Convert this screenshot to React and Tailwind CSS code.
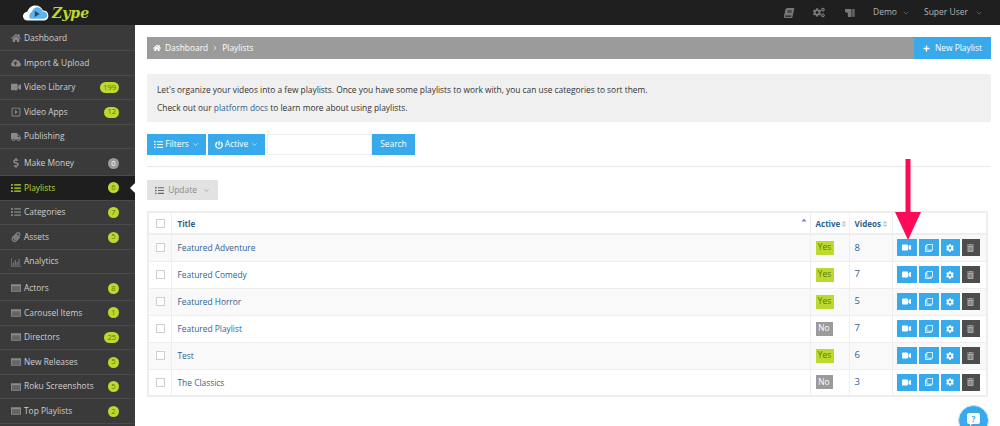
import React from "react";
import {
  FaHome, FaCloudUploadAlt, FaVideo, FaRegCaretSquareRight, FaTruck, FaDollarSign, FaListUl, FaList,
  FaPaperclip, FaBook, FaCogs, FaPlus, FaPowerOff, FaCog, FaTrashAlt, FaRegClone, FaSort, FaCaretUp,
} from "react-icons/fa";
import { ChevronDown, ChevronRight } from "lucide-react";

const Panel = ({ className }) => (
  <svg viewBox="0 0 16 14" className={className} fill="currentColor">
    <path d="M0 1h16v12H0z M1.500 4.500v7h13v-7z" fillRule="evenodd" />
    <path d="M1.500 4.500h13v7h-13z" opacity="0.55" />
  </svg>
);

const Bars = ({ className }) => (
  <svg viewBox="0 0 16 14" className={className} fill="currentColor">
    <path d="M0 1h1v12h15v1H0z" />
    <path d="M3 8h1.500v4H3zM6 4h1.500v8H6zM9 7h1.500v5H9zM12 2h1.500v10H12z" />
  </svg>
);

const Flag = ({ className }) => (
  <svg viewBox="0 0 14 13" className={className} fill="currentColor">
    <path d="M0 1h9v11H4V6.500L0 5z" />
    <path d="M10 1h3.500v11H10z" opacity="0.8" />
  </svg>
);

const menu = [
  { label: "Dashboard", icon: FaHome },
  { label: "Import & Upload", icon: FaCloudUploadAlt },
  { label: "Video Library", icon: FaVideo, badge: "199" },
  { label: "Video Apps", icon: FaRegCaretSquareRight, badge: "12" },
  { label: "Publishing", icon: FaTruck, gap: true },
  { label: "Make Money", icon: FaDollarSign, badge: "0", grey: true },
  { label: "Playlists", icon: FaListUl, badge: "6", active: true },
  { label: "Categories", icon: FaList, badge: "7" },
  { label: "Assets", icon: FaPaperclip, badge: "5" },
  { label: "Analytics", icon: Bars, gap: true },
  { label: "Actors", icon: Panel, badge: "8" },
  { label: "Carousel Items", icon: Panel, badge: "1" },
  { label: "Directors", icon: Panel, badge: "25" },
  { label: "New Releases", icon: Panel, badge: "5" },
  { label: "Roku Screenshots", icon: Panel, badge: "5" },
  { label: "Top Playlists", icon: Panel, badge: "2" },
];

const rows = [
  { title: "Featured Adventure", active: true, videos: 8 },
  { title: "Featured Comedy", active: true, videos: 7 },
  { title: "Featured Horror", active: true, videos: 5 },
  { title: "Featured Playlist", active: false, videos: 7 },
  { title: "Test", active: true, videos: 6 },
  { title: "The Classics", active: false, videos: 3 },
];

const Logo = () => (
  <div className="flex items-center gap-[1px] ml-[22px]">
    <svg viewBox="0 0 32 18" className="w-[29px] h-[16px]">
      <path d="M6 17.500a5 5 0 0 1-.5-10C7.500 2.500 11 .5 15 .5c4 0 7 2.300 8.300 5.600a5.800 5.800 0 0 1 1.700 11.400z" fill="#fff" />
      <path d="M9 15.500c-2-2-1-6 1.500-7.500C12 4 15 2.500 17 2.500c3.500 0 5.500 2.500 6 5 3-.5 5.500 2 5 5-.3 1.800-2 3-4 3z" fill="#5cb5ee" />
      <path d="M14 6.500l5.500 3.500-5.500 3.500z" fill="#2a4a63" />
    </svg>
    <span className="font-['DejaVu_Serif',serif] text-[14px] leading-none font-bold italic text-[#bcd92e]">Zype</span>
  </div>
);

const Checkbox = () => <span className="block w-[9px] h-[9px] bg-white border border-[#cfcfcf]" />;

const ActionButton = ({ className, children }) => (
  <button className={`h-[17px] flex items-center justify-center text-white ${className}`}>{children}</button>
);

const MenuItem = ({ item }) => {
  const Icon = item.icon;
  return (
    <div
      className={`relative h-[24.6px] flex items-center pl-[9px] pr-[16px] text-[8.400px] border-b border-[#4a4a4a] ${
        item.active ? "bg-[#1e1e1e] text-[#bcd92e]" : "text-[#cfcfcf]"
      } ${item.gap ? "mb-[2px]" : ""}`}
    >
      <span className="w-[14px] flex justify-center mr-[1px]">
        <Icon className={`w-[10px] h-[10px] ${item.active ? "text-[#bcd92e]" : "text-[#8a8a8a]"}`} />
      </span>
      <span className="flex-1 whitespace-nowrap">{item.label}</span>
      {item.badge && (
        <span
          className={`h-[11px] min-w-[11px] px-[3px] rounded-full flex items-center justify-center text-[7.500px] ${
            item.grey ? "bg-[#9a9a9a] text-white" : "bg-[#bcd92e] text-[#5f7a08]"
          }`}
        >
          {item.badge}
        </span>
      )}
      {item.active && (
        <span className="absolute right-0 top-[7px] w-0 h-0 border-y-[5px] border-y-transparent border-r-[5px] border-r-white" />
      )}
    </div>
  );
};

const App = () => {
  return (
    <div className="relative w-[1000px] h-[426px] overflow-hidden bg-white font-['Open_Sans',sans-serif]">
      <header className="h-[25px] bg-[#1f1f1f] flex items-center">
        <Logo />
        <div className="ml-auto flex items-center text-[8.500px] text-[#b5b5b5]">
          <FaBook className="w-[10px] h-[10px] text-[#777] mr-[19px] -skew-x-12" />
          <FaCogs className="w-[12px] h-[11px] text-[#777] mr-[20px]" />
          <Flag className="w-[10px] h-[10px] text-[#777] mr-[18px]" />
          <span className="mr-[5px]">Demo</span>
          <ChevronDown className="w-[8px] h-[8px] text-[#777] mr-[14px]" />
          <span className="mr-[7px]">Super User</span>
          <ChevronDown className="w-[8px] h-[8px] text-[#777] mr-[17px]" />
        </div>
      </header>

      <div className="flex h-[401px]">
        <aside className="w-[135px] shrink-0 bg-[#3a3a3a] pt-[1.500px]">
          {menu.map((item) => (
            <MenuItem key={item.label} item={item} />
          ))}
        </aside>

        <main className="flex-1 pl-[12px] pr-[9px] pt-[12px] text-[#333]">
          <div className="h-[22px] flex bg-[#9b9b9b] text-white text-[8.400px]">
            <div className="flex-1 flex items-center pl-[6px]">
              <FaHome className="w-[8px] h-[8px] mr-[4px]" />
              <span>Dashboard</span>
              <ChevronRight className="w-[8px] h-[8px] mx-[3px]" />
              <span>Playlists</span>
            </div>
            <button className="w-[77px] bg-[#38aaeb] flex items-center justify-center font-medium">
              <FaPlus className="w-[7px] h-[7px] mr-[5px]" />
              New Playlist
            </button>
          </div>

          <div className="mt-[15px] h-[48px] bg-[#f0f0f0] px-[10px] pt-[7px] text-[8.400px] leading-[18px] text-[#333]">
            <p>Let's organize your videos into a few playlists. Once you have some playlists to work with, you can use categories to sort them.</p>
            <p>
              Check out our <span className="text-[#2f5f8f]">platform docs</span> to learn more about using playlists.
            </p>
          </div>

          <div className="mt-[12px] flex h-[21px] text-white text-[8.400px] font-medium">
            <button className="w-[59px] bg-[#38aaeb] flex items-center justify-center">
              <FaListUl className="w-[9px] h-[9px] mr-[2px]" />
              Filters
              <ChevronDown className="w-[7px] h-[7px] ml-[3px]" />
            </button>
            <button className="ml-[2px] w-[57px] bg-[#38aaeb] flex items-center justify-center">
              <FaPowerOff className="w-[8px] h-[8px] mr-[2px]" />
              Active
              <ChevronDown className="w-[7px] h-[7px] ml-[3px]" />
            </button>
            <div className="ml-[2px] w-[105px] bg-white border border-[#eeeeee]" />
            <button className="w-[43px] bg-[#38aaeb]">Search</button>
          </div>

          <div className="mt-[11px] border-t border-[#e8e8e8]" />

          <button className="mt-[13px] w-[71px] h-[20px] bg-[#e2e2e2] text-[#8a8a8a] text-[8.400px] flex items-center justify-center">
            <FaListUl className="w-[9px] h-[9px] mr-[4px] text-[#666]" />
            Update
            <ChevronDown className="w-[7px] h-[7px] ml-[6px]" />
          </button>

          <table className="mt-[11px] w-[841px] table-fixed border-collapse border-2 border-[#eeeeee] text-[8.400px]">
            <colgroup>
              <col className="w-[23px]" />
              <col />
              <col className="w-[39px]" />
              <col className="w-[43px]" />
              <col className="w-[95px]" />
            </colgroup>
            <thead>
              <tr className="h-[22px] text-[#2f5f8f] text-[8px] font-bold">
                <th className="border border-[#eeeeee] border-b-2 pl-[7px]"><Checkbox /></th>
                <th className="relative border border-[#eeeeee] border-b-2 text-left pl-[6px] pt-[2px]">
                  Title
                  <FaCaretUp className="absolute right-[2px] top-[3px] w-[8px] h-[8px] text-[#7b7fd6]" />
                </th>
                <th className="border border-[#eeeeee] border-b-2 text-left pl-[5px] pt-[2px]">
                  <span className="flex items-center">Active<FaSort className="w-[6px] h-[8px] ml-[1px] text-[#ccc]" /></span>
                </th>
                <th className="border border-[#eeeeee] border-b-2 text-left pl-[5px] pt-[2px]">
                  <span className="flex items-center">Videos<FaSort className="w-[6px] h-[8px] ml-[1px] text-[#ccc]" /></span>
                </th>
                <th className="border border-[#eeeeee] border-b-2" />
              </tr>
            </thead>
            <tbody>
              {rows.map((row, i) => (
                <tr key={row.title} className={`h-[27px] ${i % 2 === 0 ? "bg-[#f9f9f9]" : "bg-white"}`}>
                  <td className="border border-[#eeeeee] pl-[7px]"><Checkbox /></td>
                  <td className="border border-[#eeeeee] pl-[6px] pt-[2px] text-[#2f5f8f]">{row.title}</td>
                  <td className="border border-[#eeeeee] pl-[5px]">
                    <span className={`flex items-center justify-center h-[14px] text-[8.400px] ${
                      row.active ? "w-[18px] bg-[#bcd92e] text-[#5f7a08]" : "w-[17px] bg-[#9b9b9b] text-white"
                    }`}>
                      {row.active ? "Yes" : "No"}
                    </span>
                  </td>
                  <td className="border border-[#eeeeee] pl-[5px] text-[9.500px] text-[#2f5f8f]">{row.videos}</td>
                  <td className="border border-[#eeeeee] pl-[4px]">
                    <div className="flex">
                      <ActionButton className="w-[20px] bg-[#38aaeb]"><FaVideo className="w-[9px] h-[9px]" /></ActionButton>
                      <ActionButton className="ml-[2px] w-[20px] bg-[#38aaeb]"><FaRegClone className="w-[8px] h-[8px]" /></ActionButton>
                      <ActionButton className="ml-[2px] w-[19px] bg-[#38aaeb]"><FaCog className="w-[8px] h-[8px]" /></ActionButton>
                      <ActionButton className="ml-[2px] w-[18px] bg-[#4d4d4d] text-[#a8a8a8]"><FaTrashAlt className="w-[7px] h-[8px] text-[#a8a8a8]" /></ActionButton>
                    </div>
                  </td>
                </tr>
              ))}
            </tbody>
          </table>
        </main>
      </div>

      {/* pink arrow laid over the table */}
      <svg viewBox="0 0 26 81" className="absolute left-[895px] top-[159px] w-[26px] h-[81px]">
        <path d="M10.500 0h5v53h10.500L13 81 0 53h10.500z" fill="#ff0a58" />
      </svg>

      {/* help bubble, cut off by the bottom of the window */}
      <div className="absolute left-[958px] top-[405px] w-[31px] h-[31px] rounded-full bg-[#38aaeb] border border-[#cfe8f8] flex items-start justify-center pt-[7px]">
        <span className="relative w-[13px] h-[11px] rounded-[2px] bg-white text-[#38aaeb] text-[8px] font-bold leading-[11px] text-center">
          ?
          <span className="absolute left-[3px] top-[10px] w-0 h-0 border-t-[3px] border-t-white border-r-[3px] border-r-transparent" />
        </span>
      </div>
    </div>
  );
};

export default App;
